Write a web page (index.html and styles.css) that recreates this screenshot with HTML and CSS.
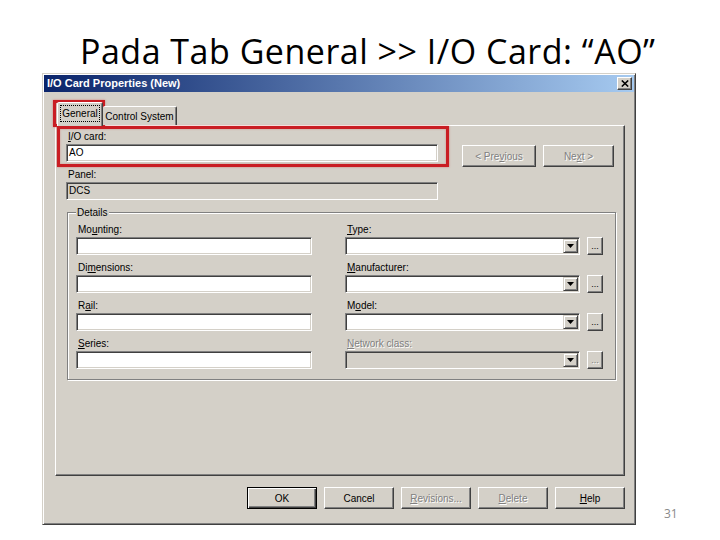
FILE: index.html
```html
<!DOCTYPE html>
<html lang="id">
<head>
<meta charset="utf-8">
<title>I/O Card Properties</title>
<link rel="stylesheet" href="styles.css">
</head>
<body>
<div class="slide">
  <h1 class="slide-title">Pada Tab General &gt;&gt; I/O Card: “AO”</h1>
  <div class="stage">
    <div class="dialog">
      <div class="titlebar">
        <span class="titlebar-text">I/O Card Properties (New)</span>
        <span class="close-btn"><svg width="8" height="7" viewBox="0 0 8 7"><path d="M0.8 0.5 L7.2 6.5 M7.2 0.5 L0.8 6.5" stroke="#000" stroke-width="1.6" fill="none"/></svg></span>
      </div>
      <div class="dlg-body">
        <div class="tabstrip">
          <div class="tab tab-active"><span class="focus">General</span></div>
          <div class="tab tab-ctrl">Control System</div>
        </div>
        <div class="tabpanel">
          <div class="top-row">
            <div class="field field-wide">
              <span class="lbl"><u>I</u>/O card:</span>
              <div class="edit">AO</div>
            </div>
            <div class="nav-btns">
              <div class="btn btn-prev disabled">&lt; Pre<u>v</u>ious</div>
              <div class="btn btn-next disabled">Ne<u>x</u>t &gt;</div>
            </div>
          </div>
          <div class="field field-wide panel-field">
            <span class="lbl">Panel:</span>
            <div class="edit edit-disabled">DCS</div>
          </div>
          <fieldset class="groupbox">
            <legend class="group-legend">Details</legend>
            <div class="details-grid">
              <div class="field">
                <span class="lbl">Mo<u>u</u>nting:</span>
                <div class="edit"></div>
              </div>
              <div class="field">
                <span class="lbl"><u>T</u>ype:</span>
                <div class="combo-row">
                  <div class="combo"><span class="drop-btn"><svg width="7" height="4" viewBox="0 0 7 4"><path d="M0 0 H7 L3.5 4 Z" fill="#000"/></svg></span></div>
                  <div class="btn btn-dots">...</div>
                </div>
              </div>
              <div class="field">
                <span class="lbl">Di<u>m</u>ensions:</span>
                <div class="edit"></div>
              </div>
              <div class="field">
                <span class="lbl"><u>M</u>anufacturer:</span>
                <div class="combo-row">
                  <div class="combo"><span class="drop-btn"><svg width="7" height="4" viewBox="0 0 7 4"><path d="M0 0 H7 L3.5 4 Z" fill="#000"/></svg></span></div>
                  <div class="btn btn-dots">...</div>
                </div>
              </div>
              <div class="field">
                <span class="lbl">R<u>a</u>il:</span>
                <div class="edit"></div>
              </div>
              <div class="field">
                <span class="lbl">M<u>o</u>del:</span>
                <div class="combo-row">
                  <div class="combo"><span class="drop-btn"><svg width="7" height="4" viewBox="0 0 7 4"><path d="M0 0 H7 L3.5 4 Z" fill="#000"/></svg></span></div>
                  <div class="btn btn-dots">...</div>
                </div>
              </div>
              <div class="field">
                <span class="lbl"><u>S</u>eries:</span>
                <div class="edit"></div>
              </div>
              <div class="field">
                <span class="lbl disabled"><u>N</u>etwork class:</span>
                <div class="combo-row">
                  <div class="combo combo-disabled"><span class="drop-btn"><svg width="7" height="4" viewBox="0 0 7 4"><path d="M0 0 H7 L3.5 4 Z" fill="#000"/></svg></span></div>
                  <div class="btn btn-dots disabled">...</div>
                </div>
              </div>
            </div>
          </fieldset>
        </div>
        <div class="footer">
          <div class="btn btn-foot btn-default">OK</div>
          <div class="btn btn-foot">Cancel</div>
          <div class="btn btn-foot disabled"><u>R</u>evisions...</div>
          <div class="btn btn-foot disabled"><u>D</u>elete</div>
          <div class="btn btn-foot"><u>H</u>elp</div>
        </div>
      </div>
      <div class="hl hl-tab"></div>
      <div class="hl hl-card"></div>
    </div>
    <div class="page-num">31</div>
  </div>
</div>
</body>
</html>
```
FILE: styles.css
```css
* { box-sizing: border-box; }

body {
  margin: 0;
  background: #ffffff;
  width: 720px;
  height: 540px;
  overflow: hidden;
}

.slide {
  display: flex;
  flex-direction: column;
}

.slide-title {
  margin: 0 0 5px;
  padding: 34px 0 0 80px;
  height: 68px;
  font: 400 34px/34px "Open Sans", sans-serif;
  letter-spacing: 0.5px;
  color: #000;
  white-space: nowrap;
}

.stage {
  display: flex;
  align-items: flex-end;
  padding-left: 42px;
  gap: 28px;
}

.dialog {
  position: relative;
  width: 594px;
  height: 452px;
  background: #d4d0c8;
  border: 1px solid;
  border-color: #d4d0c8 #404040 #404040 #d4d0c8;
  box-shadow: inset 1px 1px #ffffff, inset -1px -1px #808080;
  padding: 1px;
  display: flex;
  flex-direction: column;
  font: 10px/13px "Liberation Sans", Arial, sans-serif;
  color: #000;
}

.titlebar {
  height: 17px;
  flex: none;
  display: flex;
  align-items: center;
  justify-content: space-between;
  padding: 0 2px 0 3px;
  background: linear-gradient(to right, #0a246a, #a6caf0);
  color: #fff;
  font: 700 11px/13px "Liberation Sans", Arial, sans-serif;
}

.close-btn {
  width: 15px;
  height: 13px;
  display: flex;
  align-items: center;
  justify-content: center;
  background: #d4d0c8;
  border: 1px solid;
  border-color: #ffffff #404040 #404040 #ffffff;
  box-shadow: inset -1px -1px #808080;
}

.dlg-body {
  flex: 1;
  display: flex;
  flex-direction: column;
  padding: 10px 9px 0 11px;
}

.tabstrip {
  position: relative;
  z-index: 1;
  height: 23px;
  display: flex;
  align-items: flex-end;
  padding-left: 2px;
}

.tab {
  height: 19px;
  display: flex;
  align-items: center;
  justify-content: center;
  background: #d4d0c8;
  border: 1px solid;
  border-bottom: none;
  border-color: #ffffff #404040 transparent #ffffff;
  box-shadow: inset -1px 0 #808080;
  border-radius: 2px 2px 0 0;
}

.tab-active {
  width: 46px;
  height: 24px;
  margin-bottom: -1px;
  padding-bottom: 2px;
}

.tab-ctrl {
  width: 74px;
  border-left: none;
  padding-top: 1px;
}

.focus {
  border: 1px dotted #000;
  padding: 1px 1px;
  line-height: 13px;
}

.tabpanel {
  height: 351px;
  flex: none;
  border: 1px solid;
  border-color: #ffffff #404040 #404040 #ffffff;
  box-shadow: inset -1px -1px #808080;
  padding: 4px 10px 0 10px;
}

.top-row {
  display: flex;
}

.field {
  display: flex;
  flex-direction: column;
  gap: 1px;
}

.field-wide {
  width: 372px;
}

.lbl {
  display: block;
  height: 13px;
  line-height: 13px;
  padding-left: 2px;
  white-space: nowrap;
}

.edit {
  height: 18px;
  background: #ffffff;
  border: 1px solid;
  border-color: #808080 #ffffff #ffffff #808080;
  box-shadow: inset 1px 1px #404040, inset -1px -1px #d4d0c8;
  padding: 0 2px;
  line-height: 16px;
}

.edit-disabled {
  background: #d4d0c8;
}

.nav-btns {
  display: flex;
  gap: 7px;
  margin-left: 24px;
  padding-top: 15px;
}

.btn {
  height: 22px;
  display: flex;
  align-items: center;
  justify-content: center;
  background: #d4d0c8;
  border: 1px solid;
  border-color: #ffffff #404040 #404040 #ffffff;
  box-shadow: inset -1px -1px #808080;
  white-space: nowrap;
}

.btn-prev { width: 74px; }
.btn-next { width: 71px; }

.disabled {
  color: #808080;
  text-shadow: 1px 1px #ffffff;
}

.panel-field {
  margin-top: 1px;
}

.groupbox {
  margin: 6px 0 0 1px;
  width: 549px;
  min-width: 0;
  border: 1px solid #808080;
  box-shadow: inset 1px 1px #ffffff, 1px 1px #ffffff;
  padding: 4px 12px 10px 8px;
}

.group-legend {
  padding: 0 1px;
  line-height: 13px;
  background: #d4d0c8;
}

.details-grid {
  display: grid;
  grid-template-columns: 236px 258px;
  column-gap: 33px;
  row-gap: 6px;
}

.combo-row {
  display: flex;
  gap: 7px;
}

.combo {
  width: 235px;
  height: 18px;
  display: flex;
  justify-content: flex-end;
  padding: 1px;
  background: #ffffff;
  border: 1px solid;
  border-color: #808080 #ffffff #ffffff #808080;
  box-shadow: inset 1px 1px #404040, inset -1px -1px #d4d0c8;
}

.combo-disabled {
  background: #d4d0c8;
}

.drop-btn {
  width: 15px;
  height: 14px;
  display: flex;
  align-items: center;
  justify-content: center;
  background: #d4d0c8;
  border: 1px solid;
  border-color: #d4d0c8 #404040 #404040 #d4d0c8;
  box-shadow: inset 1px 1px #ffffff, inset -1px -1px #808080;
}

.btn-dots {
  width: 16px;
  height: 18px;
  align-items: flex-end;
  padding-bottom: 3px;
  font-size: 9px;
  line-height: 9px;
}

.footer {
  display: flex;
  justify-content: flex-end;
  gap: 7px;
  margin-top: 11px;
}

.btn-foot {
  width: 70px;
}

.btn-default {
  border-color: #000000;
  box-shadow: inset 1px 1px #ffffff, inset -1px -1px #404040, inset -2px -2px #808080;
}

.hl {
  position: absolute;
  border: 3px solid #c91d23;
  box-shadow: 0 0 2px rgba(215, 70, 70, 0.6), inset 0 0 2px rgba(215, 70, 70, 0.5);
  pointer-events: none;
}

.hl-tab {
  left: 10px;
  top: 26px;
  width: 52px;
  height: 27px;
}

.hl-card {
  left: 14px;
  top: 52px;
  width: 392px;
  height: 41px;
}

.page-num {
  margin-bottom: 5px;
  font: 400 12px/12px "Open Sans", sans-serif;
  color: #8a8a8a;
}
```
